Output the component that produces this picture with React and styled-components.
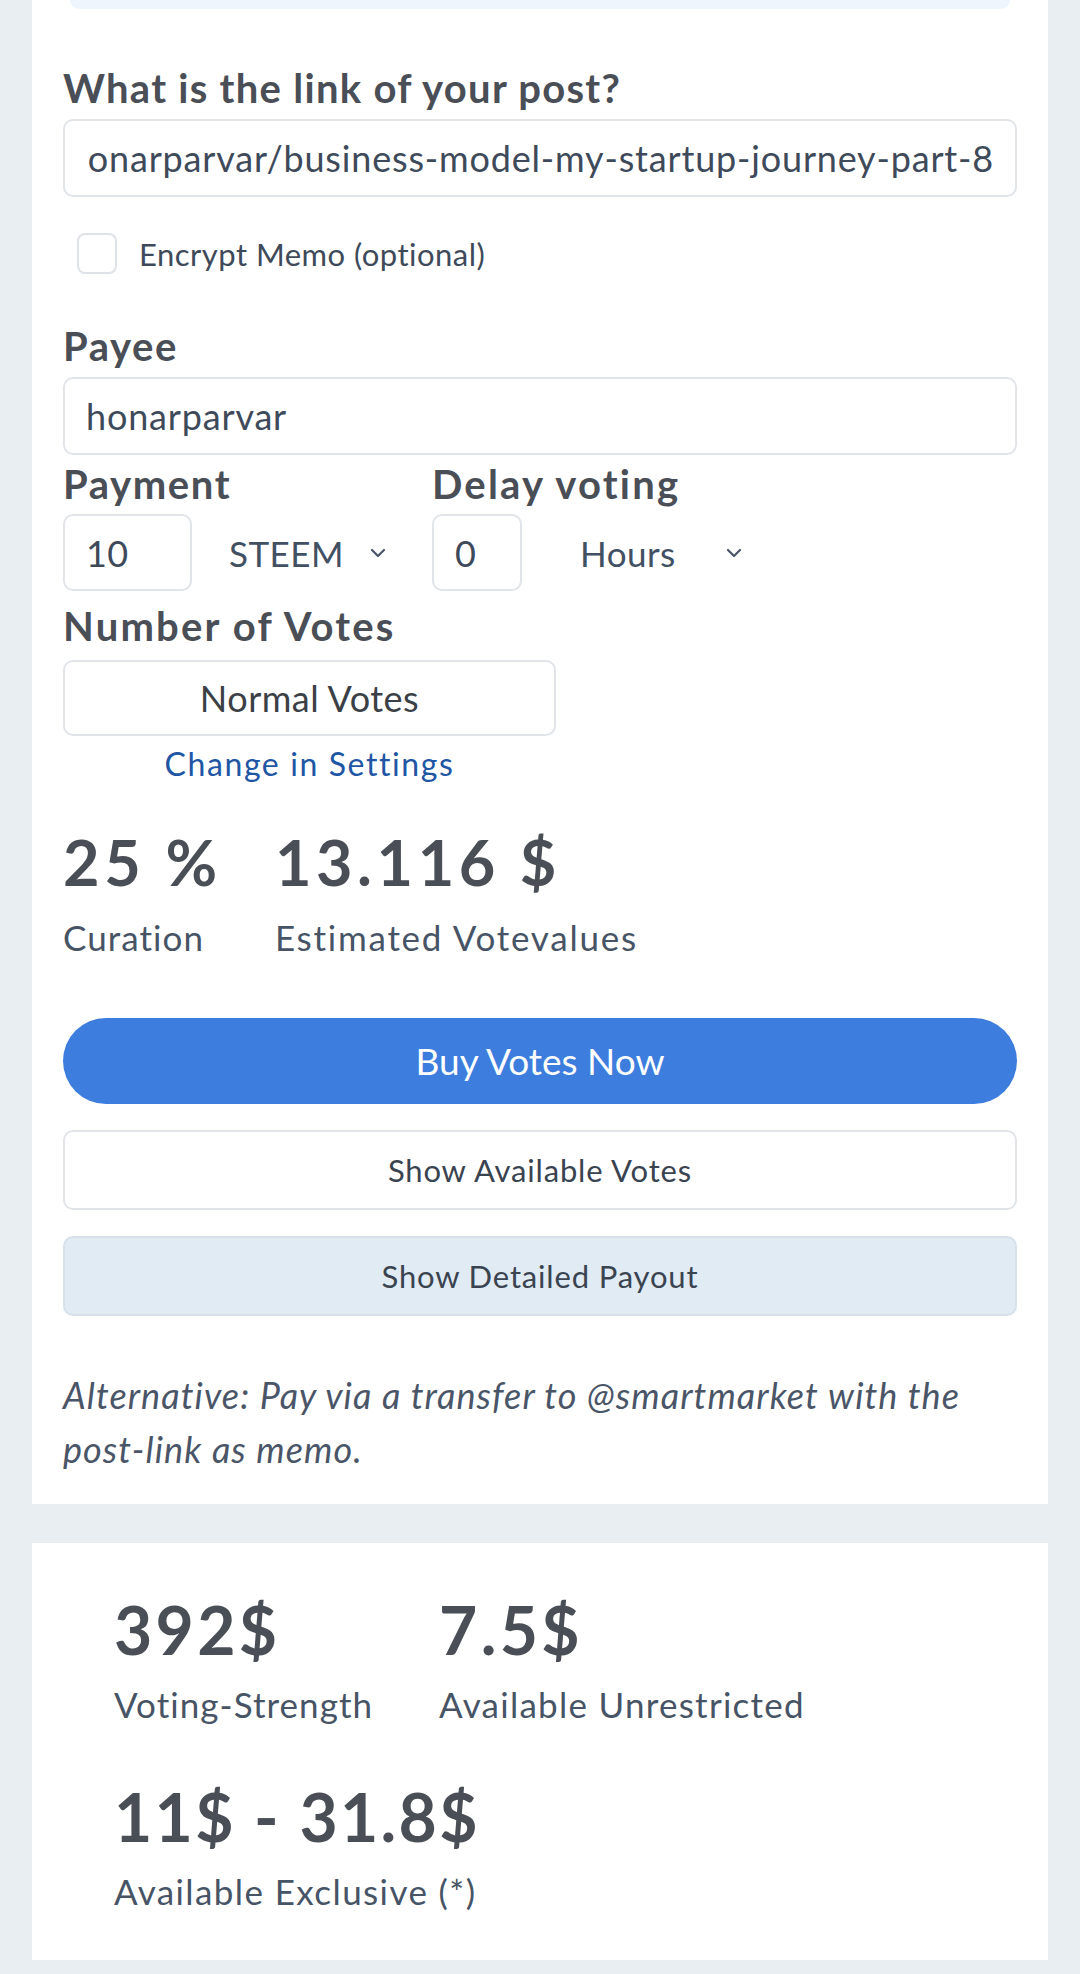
import styled, { createGlobalStyle } from "styled-components";

const GlobalStyle = createGlobalStyle`
  * { box-sizing: border-box; }
  html, body {
    margin: 0;
    padding: 0;
    background: #e9eef2;
  }
  body {
    font-family: Lato, "Noto Sans", sans-serif;
    color: #4a4e56;
    letter-spacing: 0.03em;
  }
`;

const Page = styled.div`
  display: flex;
  flex-direction: column;
  gap: 39px;
  padding: 0 32px 10px;
`;

const Card = styled.section`
  background: #fff;
  padding: ${(p) => p.$pad};
`;

const TopStrip = styled.div`
  height: 9px;
  margin: 0 7px;
  background: #eef5fc;
  border-radius: 0 0 20px 20px;
`;

const Label = styled.div`
  font-weight: 700;
  font-size: 40px;
  line-height: 48px;
  letter-spacing: ${(p) => p.$ls || 0.04}em;
  color: #4a4e56;
  margin-top: ${(p) => p.$mt || 0}px;
`;

const Field = styled.div`
  height: 78px;
  margin-top: ${(p) => p.$mt || 0}px;
  border: 2px solid #e1e4e8;
  border-radius: 10px;
  display: flex;
  align-items: center;
  padding: 0 21px;
  font-size: 36px;
  letter-spacing: 0.023em;
  color: #3e4a5a;
  background: #fff;
`;

const FieldClip = styled.div`
  flex: 1;
  min-width: 0;
  display: flex;
  justify-content: ${(p) => (p.$end ? "flex-end" : "flex-start")};
  overflow: hidden;
`;

const FieldText = styled.span`
  white-space: nowrap;
  flex-shrink: 0;
`;

const CheckRow = styled.label`
  display: flex;
  align-items: center;
  gap: 22px;
  margin-top: 36px;
  padding-left: 14px;
  font-size: 31px;
  color: #3e4a5a;
`;

const CheckBox = styled.span`
  width: 40px;
  height: 41px;
  border: 2px solid #dfe2e6;
  border-radius: 8px;
  background: #fff;
`;

const SplitRow = styled.div`
  display: flex;
`;

const Group = styled.div`
  display: flex;
  flex-direction: column;
  width: ${(p) => (p.$w ? `${p.$w}px` : "auto")};
`;

const Controls = styled.div`
  display: flex;
  align-items: center;
  margin-top: 6px;
`;

const NumberBox = styled.div`
  width: ${(p) => p.$w}px;
  height: 77px;
  border: 2px solid #e1e4e8;
  border-radius: 10px;
  display: flex;
  align-items: center;
  padding: 0 21px;
  font-size: 36px;
  color: #3e4a5a;
`;

const Select = styled.div`
  width: ${(p) => p.$w}px;
  display: flex;
  align-items: center;
  justify-content: space-between;
  padding-left: ${(p) => p.$pl}px;
  padding-right: ${(p) => p.$pr}px;
  font-size: 35px;
  color: #425063;
`;

const VotesBox = styled.div`
  width: 493px;
  height: 76px;
  margin-top: 10px;
  border: 2px solid #e1e4e8;
  border-radius: 10px;
  display: flex;
  align-items: center;
  justify-content: center;
  font-size: 36px;
  color: #3b3f46;
`;

const SettingsLink = styled.a`
  display: block;
  width: 493px;
  margin-top: 8px;
  text-align: center;
  font-size: 32px;
  line-height: 40px;
  letter-spacing: 0.05em;
  color: #2156a5;
  text-decoration: none;
`;

const StatRow = styled.div`
  display: flex;
  gap: ${(p) => p.$gap}px;
  margin-top: ${(p) => p.$mt || 0}px;
`;

const Stat = styled.div`
  display: flex;
  flex-direction: column;
`;

const StatValue = styled.div`
  font-weight: 700;
  font-size: ${(p) => p.$size}px;
  line-height: 1.2;
  letter-spacing: ${(p) => p.$ls || 0.06}em;
  color: #4a4e56;
  white-space: nowrap;
`;

const StatLabel = styled.div`
  margin-top: ${(p) => p.$mt}px;
  font-size: 35px;
  line-height: 42px;
  letter-spacing: ${(p) => p.$ls || 0.035}em;
  color: #475466;
  white-space: nowrap;
`;

const Button = styled.button`
  display: block;
  width: 100%;
  margin-top: ${(p) => p.$mt}px;
  font-family: inherit;
  cursor: pointer;
  ${(p) =>
    p.$primary
      ? `
    height: 86px;
    border: none;
    border-radius: 43px;
    background: #3c7ddd;
    color: #fff;
    font-size: 37px;
    letter-spacing: 0;
  `
      : `
    height: 80px;
    border: 2px solid ${p.$soft ? "#d6e1eb" : "#e1e4e8"};
    border-radius: 10px;
    background: ${p.$soft ? "#e1ebf4" : "#fff"};
    color: #3a4350;
    font-size: 31px;
    letter-spacing: 0.027em;
  `}
`;

const Note = styled.p`
  margin: 52px 0 0;
  font-style: italic;
  font-size: 36px;
  line-height: 54px;
  letter-spacing: 0.03em;
  color: #4a5568;
`;

const Chevron = () => (
  <svg width="16" height="10" viewBox="0 0 16 10" fill="none">
    <path d="M2 2 L8 8 L14 2" stroke="#4a5568" strokeWidth="2.2" strokeLinecap="round" strokeLinejoin="round" />
  </svg>
);

export default function App() {
  return (
    <>
      <GlobalStyle />
      <Page>
        <Card $pad="0 31px 28px">
          <TopStrip />
          <Label $mt={55} $ls={0.032}>What is the link of your post?</Label>
          <Field $mt={7}>
            <FieldClip $end>
              <FieldText>https://steemit.com/@honarparvar/business-model-my-startup-journey-part-8</FieldText>
            </FieldClip>
          </Field>
          <CheckRow>
            <CheckBox />
            Encrypt Memo (optional)
          </CheckRow>
          <Label $mt={48}>Payee</Label>
          <Field $mt={7}>
            <FieldClip>
              <FieldText>honarparvar</FieldText>
            </FieldClip>
          </Field>
          <SplitRow>
            <Group $w={369}>
              <Label $mt={5}>Payment</Label>
              <Controls>
                <NumberBox $w={129}>10</NumberBox>
                <Select $w={210} $pl={37} $pr={16}>
                  STEEM
                  <Chevron />
                </Select>
              </Controls>
            </Group>
            <Group>
              <Label $mt={5} $ls={0.055}>Delay voting</Label>
              <Controls>
                <NumberBox $w={90}>0</NumberBox>
                <Select $w={238} $pl={58} $pr={18}>
                  Hours
                  <Chevron />
                </Select>
              </Controls>
            </Group>
          </SplitRow>
          <Label $mt={11} $ls={0.055}>Number of Votes</Label>
          <VotesBox>Normal Votes</VotesBox>
          <SettingsLink href="#">Change in Settings</SettingsLink>
          <StatRow $gap={53} $mt={40}>
            <Stat>
              <StatValue $size={63} $ls={0.075}>25 %</StatValue>
              <StatLabel $mt={16} $ls={0.03}>Curation</StatLabel>
            </Stat>
            <Stat>
              <StatValue $size={63} $ls={0.072}>13.116 $</StatValue>
              <StatLabel $mt={16} $ls={0.05}>Estimated Votevalues</StatLabel>
            </Stat>
          </StatRow>
          <Button $primary $mt={60}>Buy Votes Now</Button>
          <Button $mt={26}>Show Available Votes</Button>
          <Button $soft $mt={26}>Show Detailed Payout</Button>
          <Note>Alternative: Pay via a transfer to @smartmarket with the post-link as memo.</Note>
        </Card>
        <Card $pad="47px 82px 48px">
          <StatRow $gap={66}>
            <Stat>
              <StatValue $size={66} $ls={0.05}>392$</StatValue>
              <StatLabel $mt={14} $ls={0.03}>Voting-Strength</StatLabel>
            </Stat>
            <Stat>
              <StatValue $size={66} $ls={0.05}>7.5$</StatValue>
              <StatLabel $mt={14} $ls={0.036}>Available Unrestricted</StatLabel>
            </Stat>
          </StatRow>
          <StatRow $gap={66} $mt={52}>
            <Stat>
              <StatValue $size={66} $ls={0.035}>11$ - 31.8$</StatValue>
              <StatLabel $mt={14} $ls={0.04}>Available Exclusive (*)</StatLabel>
            </Stat>
          </StatRow>
        </Card>
      </Page>
    </>
  );
}
